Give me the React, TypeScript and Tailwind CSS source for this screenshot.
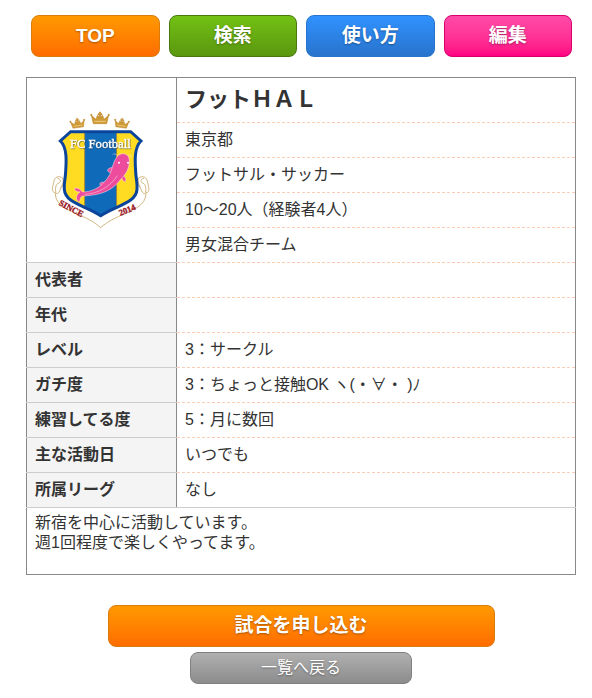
import type { ReactNode } from 'react';

const facts = ['東京都', 'フットサル・サッカー', '10～20人（経験者4人）', '男女混合チーム'];

const details = [
  { label: '代表者', value: '' },
  { label: '年代', value: '' },
  { label: 'レベル', value: '3：サークル' },
  { label: 'ガチ度', value: '3：ちょっと接触OK ヽ(・∀・ )ﾉ' },
  { label: '練習してる度', value: '5：月に数回' },
  { label: '主な活動日', value: 'いつでも' },
  { label: '所属リーグ', value: 'なし' },
];

const menu = [
  { label: 'TOP', tone: 'border-[#da7c0c] from-[#ff9900] to-[#ff6c00]' },
  { label: '検索', tone: 'border-[#467a0c] from-[#73c114] to-[#5a970f]' },
  { label: '使い方', tone: 'border-[#2874cc] from-[#3092ff] to-[#2873cc]' },
  { label: '編集', tone: 'border-[#d8006c] from-[#ff4aa8] to-[#ff0084]' },
];

const buttonBase =
  'flex items-center justify-center rounded-lg border bg-linear-to-b text-white [text-shadow:0_1px_2px_rgba(0,0,0,0.35)]';

function Crown({ x, y, size, turn }: { x: number; y: number; size: number; turn: number }) {
  return (
    <g transform={`translate(${x} ${y}) rotate(${turn}) scale(${size})`} fill="#d09a35" stroke="#b47c1c" strokeWidth="1.5">
      <path d="M-20 16 L-26 -9 L-12 3 L-8 -9 L0 -1 L8 -9 L12 3 L26 -9 L20 16 Z" />
      <path d="M-17 9 H17" stroke="#fbe6b0" strokeWidth="2" />
      <path d="M-2 -19 H2 V-14 H6 V-10 H2 V-3 H-2 V-10 H-6 V-14 H-2 Z" />
      <circle cx="-26" cy="-10" r="2.5" />
      <circle cx="26" cy="-10" r="2.5" />
    </g>
  );
}

function Crest() {
  const shield =
    'M90 95 H270 L301 123 C280 142 283 185 285 215 C286 240 291 250 289 268 C286 310 226 316 180 347 C134 316 74 310 71 268 C69 250 74 240 75 215 C77 185 80 142 59 123 Z';
  return (
    <svg viewBox="34 30 300 360" className="mx-auto block h-[120px] w-[100px]" role="img" aria-label="FC Football">
      <defs>
        <clipPath id="shield">
          <path d={shield} />
        </clipPath>
      </defs>
      <Crown x={111} y={70} size={0.8} turn={-8} />
      <Crown x={178} y={55} size={1} turn={0} />
      <Crown x={243} y={70} size={0.8} turn={8} />
      <g fill="#fff" stroke="#c9a868" strokeWidth="2.5">
        <path d="M44 278 C42 335 130 336 180 383 C230 336 318 335 316 278 L285 250 H75 Z" />
        <path d="M44 278 C30 276 36 262 39 248 C41 230 54 226 66 234 C70 246 66 252 61 262 C56 280 50 284 44 278 Z" />
        <path d="M50 235 C64 238 60 248 52 250 C46 252 42 268 46 277" fill="none" />
        <path d="M316 278 C330 276 324 262 321 248 C319 230 306 226 294 234 C290 246 294 252 299 262 C304 280 310 284 316 278 Z" />
        <path d="M310 235 C296 238 300 248 308 250 C314 252 318 268 314 277" fill="none" />
      </g>
      <g clipPath="url(#shield)">
        <rect x="50" y="90" width="260" height="262" fill="#ffdc22" />
        <rect x="132" y="80" width="96" height="280" fill="#0f6bb9" stroke="#a88330" strokeWidth="2.5" />
      </g>
      <path d={shield} fill="none" stroke="#0a459b" strokeWidth="9" />
      <g fill="#ec4c9b" stroke="#fde6f0" strokeWidth="1.5" strokeLinejoin="round">
        <path d="M218 202 C200 204 198 211 204 216 C208 219 213 215 218 213 Z" />
        <path d="M245 224 C256 232 258 240 253 246 C246 243 243 235 241 229 Z" />
        <path d="M197 246 C187 248 179 244 177 253 C184 259 190 255 196 252 Z" />
        <path d="M203 264 C198 273 190 277 183 274 C184 267 192 262 198 259 Z" />
        <path d="M118 276 C105 275 101 270 102 264 C113 264 120 268 125 276 C160 276 189 256 207 224 C215 208 218 180 233 166 C248 155 266 163 266 182 C266 212 251 226 236 243 C211 275 177 285 128 288 C116 290 121 298 115 307 C105 300 104 286 118 276 Z" />
        <path d="M132 283 C173 281 208 260 230 227" fill="none" />
        <path d="M232 168 C224 160 219 161 216 164 M262 168 C269 164 273 167 274 172" fill="none" />
      </g>
      <g fill="#fff">
        <circle cx="235" cy="188" r="3" />
        <circle cx="262" cy="188" r="3" />
      </g>
      <g
        fontFamily="'Liberation Serif', serif"
        fontSize="38"
        fill="#fff"
        stroke="#fff"
        strokeWidth="1"
        textAnchor="middle"
        className="[filter:drop-shadow(2px_2px_1px_rgba(60,60,80,0.7))]"
      >
        <text x="179" y="143">FC Football</text>
      </g>
      <g fontFamily="'Liberation Serif', serif" fontSize="26" fontWeight="700" fill="#9a1625" stroke="#9a1625" textAnchor="middle">
        <text x="88" y="333" transform="rotate(28 88 333)">SINCE</text>
        <text x="263" y="338" transform="rotate(-23 263 338)">2014</text>
      </g>
    </svg>
  );
}

function ValueCell({ children }: { children: ReactNode }) {
  return <td className="border-b border-dashed border-b-[#fbcdb4] px-2 py-[7px]">{children}</td>;
}

export default function App() {
  return (
    <main className="bg-white pt-[15px] pr-4 pb-3 pl-[26px] font-['Liberation_Sans','Noto_Sans_CJK_JP',sans-serif] text-base leading-5 text-[#333]">
      <nav className="grid grid-cols-4 gap-[9px] pr-1 pl-[5px]">
        {menu.map((item) => (
          <a key={item.label} href="#" className={`${buttonBase} ${item.tone} h-[42px] text-[19px] font-bold`}>
            {item.label}
          </a>
        ))}
      </nav>

      <table className="mt-5 w-full table-fixed border-collapse border border-[#888]">
        <colgroup>
          <col className="w-[150px]" />
          <col />
        </colgroup>
        <tbody>
          <tr>
            <td rowSpan={5} className="border-r border-b border-r-[#888] border-b-[#ccc] align-middle">
              <Crest />
            </td>
            <td className="border-b border-dashed border-b-[#fbcdb4] px-2 py-[7px]">
              <h1 className="text-[22px] leading-[30px] font-bold">フットＨＡＬ</h1>
            </td>
          </tr>
          {facts.map((fact) => (
            <tr key={fact}>
              <ValueCell>{fact}</ValueCell>
            </tr>
          ))}
          {details.map((row, i) => (
            <tr key={row.label} className="h-[35px]">
              <th
                scope="row"
                className="border-r border-b border-r-[#888] border-b-[#ccc] bg-[#f4f4f4] px-2 py-[7px] text-left font-bold"
              >
                {row.label}
              </th>
              {i === details.length - 1 ? (
                <td className="border-b border-b-[#ccc] px-2 py-[7px]">{row.value}</td>
              ) : (
                <ValueCell>{row.value}</ValueCell>
              )}
            </tr>
          ))}
          <tr>
            <td colSpan={2} className="h-[67px] px-2 pt-[5px] align-top">
              新宿を中心に活動しています。
              <br />
              週1回程度で楽しくやってます。
            </td>
          </tr>
        </tbody>
      </table>

      <div className="mt-[30px] flex flex-col items-center gap-[5px]">
        <button
          type="button"
          className={`${buttonBase} box-content h-10 w-[70%] border-[#da7c0c] from-[#ff9900] to-[#ff6c00] text-[19px] font-bold`}
        >
          試合を申し込む
        </button>
        <button
          type="button"
          className={`${buttonBase} box-content h-[30px] w-[40%] border-[#808080] from-[#b0b0b0] to-[#8c8c8c] text-base`}
        >
          一覧へ戻る
        </button>
      </div>
    </main>
  );
}
